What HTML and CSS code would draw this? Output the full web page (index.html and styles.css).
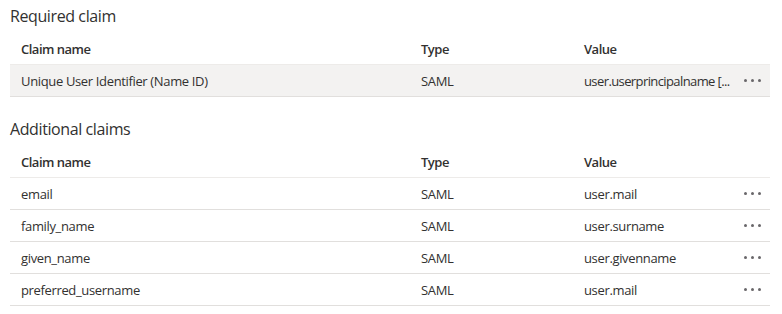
FILE: index.html
```html
<!DOCTYPE html>
<html lang="en">
<head>
<meta charset="utf-8">
<title>Claims</title>
<link rel="stylesheet" href="styles.css">
</head>
<body>
<main class="page">
  <section class="claims">
    <h2 class="claims-title">Required claim</h2>
    <div class="table">
      <div class="row head">
        <div class="cell">Claim name</div>
        <div class="cell">Type</div>
        <div class="cell">Value</div>
        <div class="cell"></div>
      </div>
      <div class="row selected">
        <div class="cell">Unique User Identifier (Name ID)</div>
        <div class="cell">SAML</div>
        <div class="cell truncated">user.userprincipalname [...</div>
        <div class="cell act"><span class="dots"><i></i><i></i><i></i></span></div>
      </div>
    </div>
  </section>
  <section class="claims">
    <h2 class="claims-title">Additional claims</h2>
    <div class="table">
      <div class="row head">
        <div class="cell">Claim name</div>
        <div class="cell">Type</div>
        <div class="cell">Value</div>
        <div class="cell"></div>
      </div>
      <div class="row">
        <div class="cell">email</div>
        <div class="cell">SAML</div>
        <div class="cell">user.mail</div>
        <div class="cell act"><span class="dots"><i></i><i></i><i></i></span></div>
      </div>
      <div class="row">
        <div class="cell">family_name</div>
        <div class="cell">SAML</div>
        <div class="cell">user.surname</div>
        <div class="cell act"><span class="dots"><i></i><i></i><i></i></span></div>
      </div>
      <div class="row">
        <div class="cell">given_name</div>
        <div class="cell">SAML</div>
        <div class="cell">user.givenname</div>
        <div class="cell act"><span class="dots"><i></i><i></i><i></i></span></div>
      </div>
      <div class="row">
        <div class="cell">preferred_username</div>
        <div class="cell">SAML</div>
        <div class="cell">user.mail</div>
        <div class="cell act"><span class="dots"><i></i><i></i><i></i></span></div>
      </div>
    </div>
  </section>
</main>
</body>
</html>
```

FILE: styles.css
```css
* { box-sizing: border-box; }
html, body { margin: 0; background: #ffffff; }
body {
  font-family: "Open Sans", "Noto Sans", "Liberation Sans", sans-serif;
  color: #323130;
}
.page {
  padding: 5px 12px 0 10px;
  display: flex;
  flex-direction: column;
  gap: 21px;
}
.claims-title {
  margin: 0 0 6px 0;
  font-size: 16px;
  line-height: 22px;
  font-weight: 400;
  letter-spacing: -0.4px;
}
.table { display: flex; flex-direction: column; }
.row {
  display: grid;
  grid-template-columns: 400px 163px 1fr 40px;
  height: 32px;
  align-items: center;
  font-size: 13px;
  letter-spacing: -0.35px;
  border-bottom: 1px solid #e1dfdd;
}
.row.head {
  font-weight: 600;
  letter-spacing: -0.5px;
  border-bottom-color: #edebe9;
}
.row.selected { background: #f3f2f1; }
.cell {
  padding-left: 11px;
  white-space: nowrap;
}
.cell.truncated { letter-spacing: -0.6px; }
.act { padding-left: 4px; display: flex; justify-content: center; }
.dots { display: flex; gap: 4px; }
.dots i {
  display: block;
  width: 3px;
  height: 3px;
  border-radius: 50%;
  background: #69676a;
}
```
